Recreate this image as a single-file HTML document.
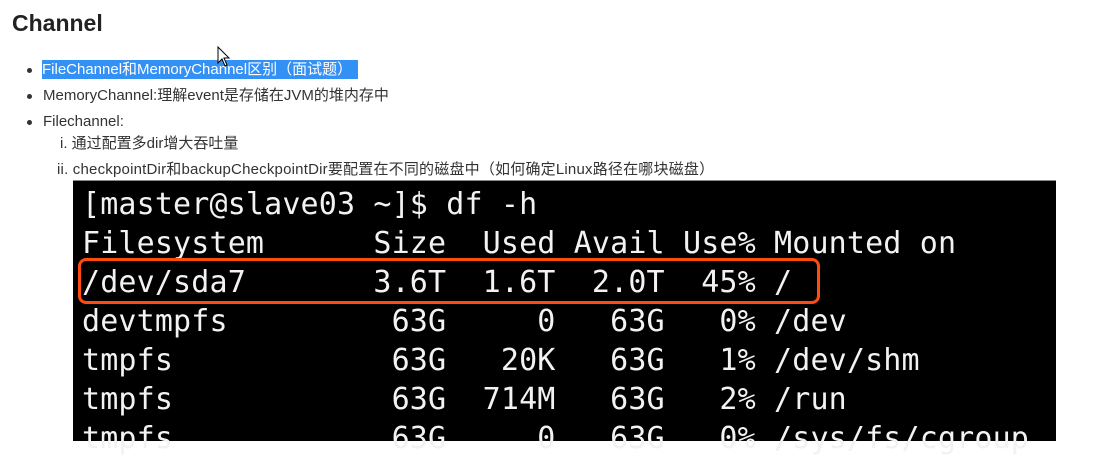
<!DOCTYPE html>
<html><head><meta charset="utf-8"><style>
body{margin:0;width:1096px;height:429px;overflow:hidden;background:#fff;position:relative;font-family:"Liberation Sans","Noto Sans CJK SC",sans-serif;color:#333}
.a{position:absolute;white-space:nowrap}
h1{position:absolute;left:12px;top:10px;margin:0;font-size:23px;font-weight:bold;color:#222}
.t{font-size:15px;line-height:19px}
.dot{position:absolute;width:5px;height:5px;border-radius:50%;background:#333}
.term{position:absolute;left:73px;top:180px;width:983px;height:260px;background:#000;border-top:1px solid #888}
.term pre{margin:0;position:absolute;left:9px;top:4px;font-family:"DejaVu Sans Mono",monospace;font-size:30px;line-height:39px;color:#f2f2f2;letter-spacing:0.15px}
.box{position:absolute;left:78px;top:258px;width:736px;height:40px;border:3px solid #ff4a10;border-radius:8px}
</style></head><body>
<h1>Channel</h1>
<div class="dot" style="left:27px;top:68px"></div>
<div class="dot" style="left:27px;top:94px"></div>
<div class="dot" style="left:27px;top:120px"></div>
<div class="a t" style="left:42px;top:60px;background:#3391f5;color:#fff;padding-right:6px">FileChannel和MemoryChannel区别（面试题）</div>
<div class="a t" style="left:43px;top:86px">MemoryChannel:理解event是存储在JVM的堆内存中</div>
<div class="a t" style="left:43px;top:112px">Filechannel:</div>
<div class="a t" style="left:60px;top:134px">i. 通过配置多dir增大吞吐量</div>
<div class="a t" style="left:57px;top:160px;letter-spacing:0.2px">ii. checkpointDir和backupCheckpointDir要配置在不同的磁盘中（如何确定Linux路径在哪块磁盘）</div>
<div class="term"><pre>[master@slave03 ~]$ df -h
Filesystem      Size  Used Avail Use% Mounted on
/dev/sda7       3.6T  1.6T  2.0T  45% /
devtmpfs         63G     0   63G   0% /dev
tmpfs            63G   20K   63G   1% /dev/shm
tmpfs            63G  714M   63G   2% /run
tmpfs            63G     0   63G   0% /sys/fs/cgroup</pre></div>
<div class="box"></div>
<svg class="a" style="left:217px;top:46px" width="14" height="22" viewBox="0 0 14 22"><path d="M1 1 L1 17 L5 13 L8 20 L10 19 L7 12 L12 12 Z" fill="#fff" stroke="#000" stroke-width="1"/></svg>
</body></html>
